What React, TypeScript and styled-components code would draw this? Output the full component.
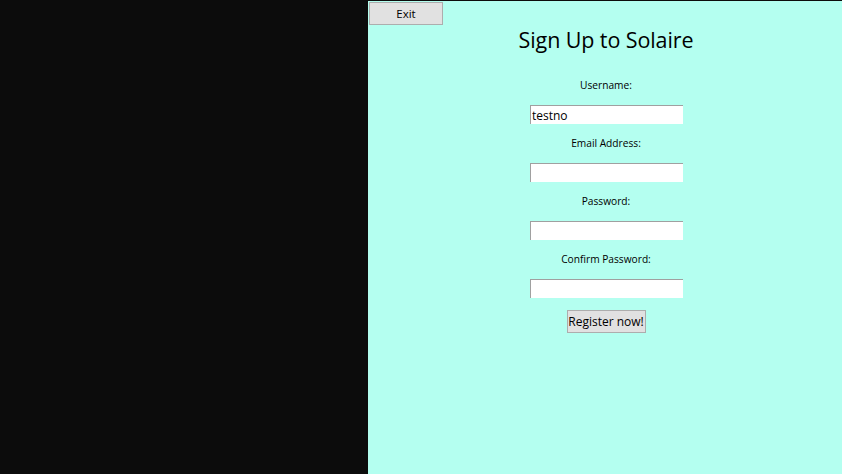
import React from "react";
import styled, { createGlobalStyle } from "styled-components";

const Global = createGlobalStyle`
  html, body { margin: 0; padding: 0; background: #0c0c0c; }
  body { font-family: "Open Sans", "Noto Sans", sans-serif; }
  * { box-sizing: border-box; }
`;

const Screen = styled.div`
  display: flex;
  width: 842px;
  height: 474px;
  overflow: hidden;
`;

const Blank = styled.div`
  width: 368px;
  flex: none;
  background: #0c0c0c;
`;

const Panel = styled.div`
  flex: 1;
  display: flex;
  flex-direction: column;
  align-items: center;
  background: #b4fff0;
  margin-top: 1px;
  padding-top: 1px;
`;

const WinButton = styled.button<{ $w: number; $h: number; $size: number; $shift?: number }>`
  width: ${(p) => p.$w}px;
  height: ${(p) => p.$h}px;
  margin-left: ${(p) => p.$shift || 0}px;
  background: #e1e1e1;
  border: 1px solid #adadad;
  border-radius: 0;
  padding: 0;
  color: #000;
  font-family: "Open Sans", "Noto Sans", sans-serif;
  font-size: ${(p) => p.$size}px;
  line-height: 1;
  display: flex;
  align-items: center;
  justify-content: center;
`;

const ExitRow = styled.div`
  align-self: stretch;
  display: flex;
  padding-left: 1px;
`;

const Title = styled.h1`
  margin: 0 0 0 2px;
  font-weight: 400;
  font-size: 21.5px;
  line-height: 30px;
  height: 30px;
  color: #000;
  letter-spacing: -0.1px;
`;

const Form = styled.div`
  margin-top: 23px;
  display: flex;
  flex-direction: column;
  align-items: center;
  gap: 12px;
`;

const Field = styled.div`
  display: flex;
  flex-direction: column;
  align-items: center;
  gap: 13px;
`;

const Label = styled.label`
  font-size: 10.2px;
  line-height: 14px;
  height: 14px;
  margin-left: 2px;
  color: #000;
`;

const Input = styled.input`
  width: 153px;
  height: 19px;
  margin-left: 3px;
  background: #fff;
  border: none;
  border-top: 1px solid #a0a0a0;
  border-left: 1px solid #a0a0a0;
  padding: 0 1px;
  font-family: "Open Sans", "Noto Sans", sans-serif;
  font-size: 12px;
  color: #000;
  outline: none;
`;

const fields = [
  { label: "Username:", value: "testno" },
  { label: "Email Address:", value: "" },
  { label: "Password:", value: "", type: "password" },
  { label: "Confirm Password:", value: "", type: "password" },
];

export default function App() {
  return (
    <>
      <Global />
      <Screen>
        <Blank />
        <Panel>
          <ExitRow>
            <WinButton $w={74} $h={23} $size={11.5}>Exit</WinButton>
          </ExitRow>
          <Title>Sign Up to Solaire</Title>
          <Form>
            {fields.map((f) => (
              <Field key={f.label}>
                <Label>{f.label}</Label>
                <Input type={f.type || "text"} defaultValue={f.value} />
              </Field>
            ))}
            <WinButton $w={79} $h={23} $size={12} $shift={2}>Register now!</WinButton>
          </Form>
        </Panel>
      </Screen>
    </>
  );
}
